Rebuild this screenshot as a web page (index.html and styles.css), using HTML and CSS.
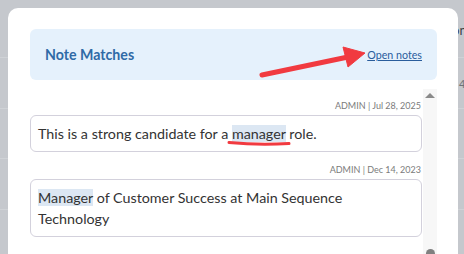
FILE: index.html
```html
<!DOCTYPE html>
<html lang="en">
<head>
<meta charset="utf-8">
<title>Note Matches</title>
<link rel="stylesheet" href="styles.css">
</head>
<body>
<div class="page">
  <span class="pg-head">Phone</span>
  <span class="pg-cell">4</span>
</div>
<div class="overlay">
  <div class="modal">
    <div class="modal-header">
      <h2 class="title">Note Matches</h2>
      <a class="open-link" href="#">Open notes</a>
    </div>
    <div class="scroll-area">
      <div class="notes">
        <div class="note">
          <div class="meta">ADMIN | Jul 28, 2025</div>
          <div class="card">This is a strong candidate for a <span class="hl">manager</span> role.</div>
        </div>
        <div class="note">
          <div class="meta">ADMIN | Dec 14, 2023</div>
          <div class="card"><span class="hl">Manager</span> of Customer Success at Main Sequence Technology</div>
        </div>
      </div>
      <div class="scrollbar">
        <span class="sb-up"></span>
        <span class="sb-thumb"></span>
      </div>
    </div>
  </div>
</div>
<svg class="annotations" viewBox="0 0 464 254" width="464" height="254" aria-hidden="true">
  <line x1="262" y1="75" x2="348" y2="57" stroke="#f13a40" stroke-width="5" stroke-linecap="round"/>
  <polygon points="343,47 365,53 348,67" fill="#f13a40" stroke="#f13a40" stroke-width="1" stroke-linejoin="round"/>
  <path d="M229 142.5 Q259 145.5 289 143.5" fill="none" stroke="#f13a40" stroke-width="3" stroke-linecap="round"/>
</svg>
</body>
</html>
```
FILE: styles.css
```css
html, body {
  margin: 0;
  padding: 0;
}
body {
  width: 464px;
  height: 254px;
  overflow: hidden;
  font-family: Lato, "Noto Sans", sans-serif;
  background-color: #c5c8cd;
  background-image: linear-gradient(to bottom,
    transparent 0, transparent 57px, #cfd2d6 57px, #cfd2d6 58px,
    transparent 58px, transparent 108px, #cfd2d6 108px, #cfd2d6 109px,
    transparent 109px, transparent 158px, #cfd2d6 158px, #cfd2d6 159px,
    transparent 159px, transparent 209px, #cfd2d6 209px, #cfd2d6 210px,
    transparent 210px);
}
.page {
  display: flex;
  flex-direction: column;
  padding: 23px 0 0 437px;
  white-space: nowrap;
}
.pg-head {
  font-size: 13px;
  line-height: 14px;
  color: #3b3e43;
}
.pg-cell {
  margin-top: 40px;
  padding-left: 22px;
  font-size: 11px;
  line-height: 13px;
  color: #6f7276;
}
.overlay {
  position: fixed;
  inset: 0;
  padding: 8px 0 0 8px;
}
.modal {
  width: 450px;
  height: 320px;
  box-sizing: border-box;
  background: #fff;
  border-radius: 10px;
  padding: 21px 21px 0 22px;
  overflow: hidden;
}
.modal-header {
  height: 51px;
  box-sizing: border-box;
  background: #e5f1fc;
  border-radius: 6px;
  display: flex;
  align-items: center;
  justify-content: space-between;
  padding: 0 15px;
}
.title {
  margin: 0;
  font-size: 14.2px;
  font-weight: 700;
  color: #2f6aa6;
}
.open-link {
  font-size: 10.7px;
  color: #2a5d9c;
  text-decoration: underline;
}
.scroll-area {
  display: flex;
  gap: 1px;
  margin-top: 9px;
  height: 170px;
}
.notes {
  width: 392px;
  padding-top: 11px;
  display: flex;
  flex-direction: column;
  gap: 12px;
}
.meta {
  font-size: 9px;
  line-height: 12px;
  color: #7b7b7b;
  text-align: right;
  padding-right: 1px;
  margin-bottom: 3px;
}
.card {
  border: 1px solid #d3d1dc;
  border-radius: 6px;
  padding: 7px 10px 7px 7px;
  font-size: 14.3px;
  line-height: 21px;
  color: #333;
}
.hl {
  background: #dce7f3;
}
.scrollbar {
  width: 14px;
  background: #f7f7f7;
  display: flex;
  flex-direction: column;
  align-items: center;
  justify-content: space-between;
  padding-top: 4px;
  box-sizing: border-box;
}
.sb-up {
  width: 0;
  height: 0;
  border-left: 5px solid transparent;
  border-right: 5px solid transparent;
  border-bottom: 5px solid #8a8a8a;
}
.sb-thumb {
  width: 9px;
  height: 10px;
  background: #808080;
  border-radius: 5px 5px 0 0;
}
.annotations {
  position: fixed;
  left: 0;
  top: 0;
  pointer-events: none;
}
```
